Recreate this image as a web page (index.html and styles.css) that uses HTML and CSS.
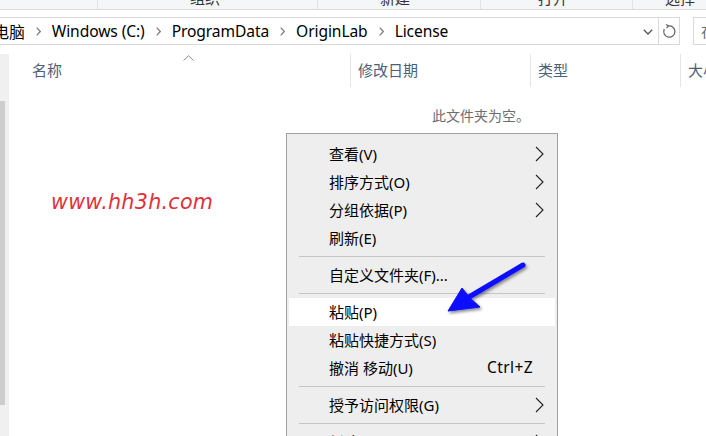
FILE: index.html
```html
<!DOCTYPE html>
<html lang="zh-CN">
<head>
<meta charset="utf-8">
<title>License</title>
<link rel="stylesheet" href="styles.css">
</head>
<body>
<div class="ribbon">
  <div class="rb"></div>
  <div class="rb rb2"><span>组织</span></div>
  <div class="rb rb3"><span>新建</span></div>
  <div class="rb rb4"><span>打开</span></div>
  <div class="rb rb5"><span>选择</span></div>
</div>

<div class="addr-row">
  <div class="addr">
    <div class="path">
      <span class="crumb first">此电脑</span>
      <svg class="csep" width="5" height="9" viewBox="0 0 5 9"><polyline points="0.7,0.7 4.3,4.5 0.7,8.3" fill="none" stroke="#7a7a7a" stroke-width="1.2"/></svg>
      <span class="crumb">Windows (C:)</span>
      <svg class="csep" width="5" height="9" viewBox="0 0 5 9"><polyline points="0.7,0.7 4.3,4.5 0.7,8.3" fill="none" stroke="#7a7a7a" stroke-width="1.2"/></svg>
      <span class="crumb">ProgramData</span>
      <svg class="csep" width="5" height="9" viewBox="0 0 5 9"><polyline points="0.7,0.7 4.3,4.5 0.7,8.3" fill="none" stroke="#7a7a7a" stroke-width="1.2"/></svg>
      <span class="crumb">OriginLab</span>
      <svg class="csep" width="5" height="9" viewBox="0 0 5 9"><polyline points="0.7,0.7 4.3,4.5 0.7,8.3" fill="none" stroke="#7a7a7a" stroke-width="1.2"/></svg>
      <span class="crumb">License</span>
    </div>
    <div class="dd">
      <svg width="10" height="6" viewBox="0 0 10 6"><polyline points="0.8,0.8 5,5 9.2,0.8" fill="none" stroke="#555" stroke-width="1.3"/></svg>
    </div>
    <div class="refresh">
      <svg width="15" height="15" viewBox="0 0 15 15"><path d="M6.2 2.1 A5.6 5.6 0 1 1 2.3 5.1" fill="none" stroke="#666" stroke-width="1.3"/><polyline points="4.3,0.4 6.4,2.1 4.5,4.1" fill="none" stroke="#666" stroke-width="1.3"/></svg>
    </div>
  </div>
  <div class="search">在 License 中搜索</div>
</div>

<div class="main">
  <div class="nav"><div class="thumb"></div></div>
  <div class="content">
    <div class="cols">
      <div class="col c-name">名称
        <svg class="sort" width="11" height="6" viewBox="0 0 11 6"><polyline points="0.6,5.4 5.5,0.8 10.4,5.4" fill="none" stroke="#8a8a8a" stroke-width="1"/></svg>
      </div>
      <div class="col c-date">修改日期</div>
      <div class="col c-type">类型</div>
      <div class="col c-size">大小</div>
    </div>
    <div class="empty">此文件夹为空。</div>
  </div>
</div>

<div class="watermark">www.hh3h.com</div>

<div class="menu">
  <div class="mi">查看(V)<svg class="sub" width="9" height="16" viewBox="0 0 9 16"><polyline points="1,1 8,8 1,15" fill="none" stroke="#222" stroke-width="1.1"/></svg></div>
  <div class="mi">排序方式(O)<svg class="sub" width="9" height="16" viewBox="0 0 9 16"><polyline points="1,1 8,8 1,15" fill="none" stroke="#222" stroke-width="1.1"/></svg></div>
  <div class="mi">分组依据(P)<svg class="sub" width="9" height="16" viewBox="0 0 9 16"><polyline points="1,1 8,8 1,15" fill="none" stroke="#222" stroke-width="1.1"/></svg></div>
  <div class="mi">刷新(E)</div>
  <div class="msep"></div>
  <div class="mi">自定义文件夹(F)...</div>
  <div class="msep"></div>
  <div class="mi hl">粘贴(P)</div>
  <div class="mi">粘贴快捷方式(S)</div>
  <div class="mi">撤消 移动(U)<span class="key">Ctrl+Z</span></div>
  <div class="msep"></div>
  <div class="mi">授予访问权限(G)<svg class="sub" width="9" height="16" viewBox="0 0 9 16"><polyline points="1,1 8,8 1,15" fill="none" stroke="#222" stroke-width="1.1"/></svg></div>
  <div class="msep"></div>
  <div class="mi">新建(W)<svg class="sub" width="9" height="16" viewBox="0 0 9 16"><polyline points="1,1 8,8 1,15" fill="none" stroke="#222" stroke-width="1.1"/></svg></div>
</div>

<svg class="arrow" width="100" height="70" viewBox="440 252 100 70">
  <defs>
    <filter id="sh" x="-20%" y="-20%" width="150%" height="150%">
      <feDropShadow dx="1.5" dy="2" stdDeviation="1.5" flood-color="#000" flood-opacity="0.45"/>
    </filter>
  </defs>
  <g filter="url(#sh)" fill="#0a0aff" stroke="#0a0aff">
    <line x1="469" y1="297" x2="523" y2="265" stroke-width="5" stroke-linecap="round"/>
    <polygon points="448,311 462,288 470,298 480,307" stroke-width="1" stroke-linejoin="round"/>
  </g>
</svg>
</body>
</html>
```
FILE: styles.css
```css
* { box-sizing: border-box; margin: 0; padding: 0; }
html, body { width: 706px; height: 436px; overflow: hidden; background: #fff; }
body {
  position: relative;
  display: flex;
  flex-direction: column;
  font-family: "Noto Sans", "Noto Sans CJK SC", sans-serif;
  color: #000;
}

/* ribbon (cut off at top) */
.ribbon {
  display: grid;
  grid-template-columns: 98px 220px 163px 152px 1fr;
  height: 10px;
  flex: 0 0 10px;
  background: #f5f6f7;
  border-bottom: 1px solid #dadbdc;
  overflow: hidden;
}
.rb {
  border-right: 1px solid #e2e3e4;
  font-family: "Noto Sans CJK SC", sans-serif;
  font-size: 15px;
  line-height: 15px;
  color: #333;
  overflow: hidden;
  white-space: nowrap;
}
.rb span { display: block; margin-top: -10px; }
.rb2 { padding-left: 92px; }
.rb3 { padding-left: 62px; }
.rb4 { padding-left: 57px; }
.rb5 { padding-left: 32px; border-right: 0; }

/* address row */
.addr-row {
  display: flex;
  margin-top: 7px;
  height: 28px;
  flex: 0 0 28px;
}
.addr {
  width: 681px;
  flex: 0 0 681px;
  margin-left: -1px;
  border: 1px solid #d9d9d9;
  display: flex;
}
.path {
  flex: 1;
  display: flex;
  align-items: center;
  overflow: hidden;
  white-space: nowrap;
  font-size: 15.6px;
  color: #000;
}
.crumb { flex: 0 0 auto; letter-spacing: -0.1px; }
.crumb.first { margin-left: -22px; letter-spacing: 0; }
.csep { flex: 0 0 5px; margin: 0 11px; }
.dd {
  width: 20px;
  flex: 0 0 20px;
  display: flex;
  align-items: center;
  justify-content: center;
  padding-top: 1px;
}
.refresh {
  width: 21px;
  flex: 0 0 21px;
  border-left: 1px solid #d9d9d9;
  display: flex;
  align-items: center;
  justify-content: center;
}
.search {
  flex: 1;
  margin-left: 13px;
  border: 1px solid #d9d9d9;
  border-right: 0;
  padding-left: 7px;
  font-family: "Noto Sans CJK SC", sans-serif;
  font-size: 15px;
  line-height: 26px;
  color: #6d6d6d;
  white-space: nowrap;
  overflow: hidden;
}

/* main area */
.main {
  display: flex;
  flex: 1;
  margin-top: 9px;
}
.nav {
  width: 8px;
  flex: 0 0 8px;
  background: #f0f0f0;
}
.thumb {
  width: 5px;
  height: 304px;
  margin-top: 47px;
  background: #cdcdcd;
}
.content {
  flex: 1;
  border-left: 1px solid #f0f0f0;
}
.cols {
  display: flex;
  height: 33px;
}
.col {
  display: flex;
  align-items: center;
  padding-left: 7px;
  padding-bottom: 2px;
  border-right: 1px solid #e5e5e5;
  font-family: "Noto Sans CJK SC", sans-serif;
  font-size: 15px;
  color: #4c607a;
  white-space: nowrap;
  overflow: hidden;
}
.c-name { width: 342px; flex: 0 0 342px; padding-left: 23px; position: relative; }
.c-date { width: 180px; flex: 0 0 180px; }
.c-type { width: 150px; flex: 0 0 150px; }
.c-size { flex: 1; border-right: 0; }
.sort { position: absolute; left: 174px; top: 1px; }

.empty {
  margin-top: 18px;
  padding-left: 423px;
  font-family: "Noto Sans CJK SC", sans-serif;
  font-size: 14px;
  line-height: 20px;
  color: #6d6d6d;
}

/* watermark */
.watermark {
  position: absolute;
  left: 51px;
  top: 189px;
  font-family: "DejaVu Sans", sans-serif;
  font-style: italic;
  font-size: 20.7px;
  letter-spacing: 0.25px;
  line-height: 26px;
  color: #e2303b;
}

/* context menu */
.menu {
  position: absolute;
  left: 286px;
  top: 133px;
  width: 272px;
  height: 320px;
  border: 1px solid #a0a0a0;
  background: #eeeeee;
  padding: 6px 2px 0;
}
.mi {
  height: 28px;
  display: flex;
  align-items: center;
  padding-left: 40px;
  padding-bottom: 2px;
  font-family: "Noto Sans", "Noto Sans CJK SC", sans-serif;
  font-size: 15px;
  color: #000;
  white-space: nowrap;
}
.mi.hl { background: #fff; }
.sub { margin-left: auto; margin-right: 11px; margin-top: 2px; }
.key { margin-left: auto; margin-right: 22px; font-size: 15.5px; letter-spacing: 0.4px; }
.msep {
  height: 1px;
  margin: 4px 10px;
  background: #c5c5c5;
}

.arrow {
  position: absolute;
  left: 440px;
  top: 252px;
}
```
